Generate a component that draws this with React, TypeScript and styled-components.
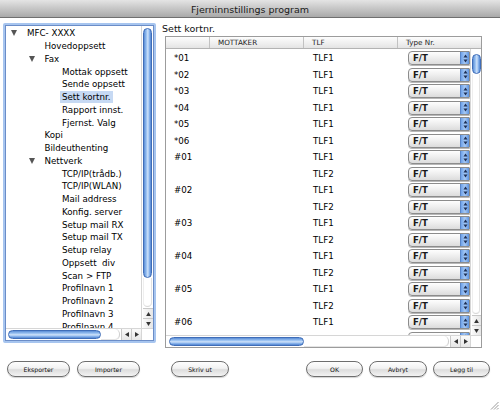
import React from "react";
import styled, { createGlobalStyle } from "styled-components";

const Global = createGlobalStyle`
  html, body { margin: 0; padding: 0; background: #fff; }
  body { font-family: "DejaVu Sans", "Lucida Grande", sans-serif; color: #000; }
  * { box-sizing: border-box; }
`;

const Window = styled.div`
  position: relative;
  width: 500px;
  height: 411px;
  background: #fff;
  display: flex;
  flex-direction: column;
  overflow: hidden;
`;

const TitleBar = styled.div`
  height: 18px;
  flex: none;
  background: linear-gradient(#e4e4e4, #c9c9c9 45%, #a9a9a9);
  border-bottom: 1px solid #6f6f6f;
  display: flex;
  align-items: center;
  justify-content: center;
  font-size: 9.5px;
  color: #1a1a1a;
  padding-top: 1px;
`;

const Main = styled.div`
  display: flex;
  align-items: flex-start;
  padding: 5px 0 0 3px;
  height: 330px;
  flex: none;
`;

/* ---------- tree ---------- */
const TreePanel = styled.div`
  width: 153px;
  height: 320px;
  border: 2px solid #a7c5ef;
  border-radius: 2px;
  flex: none;
`;

const TreeInner = styled.div`
  width: 100%;
  height: 100%;
  border: 1px solid #6b8dc7;
  display: grid;
  grid-template-columns: 1fr 12px;
  grid-template-rows: 1fr 12px;
  background: #fff;
`;

const TreeList = styled.div`
  overflow: hidden;
  padding-top: 1px;
`;

const TreeRow = styled.div<{ $level: number }>`
  height: 12.75px;
  display: flex;
  align-items: center;
  padding-left: ${(p) => 5 + p.$level * 17.5}px;
  font-size: 8.7px;
  white-space: pre;
`;

const Toggle = styled.span`
  width: 16px;
  flex: none;
  display: flex;
  align-items: center;
`;

const Triangle = styled.span`
  width: 0;
  height: 0;
  border-left: 3.5px solid transparent;
  border-right: 3.5px solid transparent;
  border-top: 6px solid #555;
`;

const TreeLabel = styled.span<{ $sel?: boolean }>`
  margin-left: -2px;
  padding: 1px 2px;
  background: ${(p) => (p.$sel ? "#c6d9f3" : "transparent")};
`;

/* ---------- scrollbars ---------- */
const VScroll = styled.div`
  display: flex;
  flex-direction: column;
  background: #fff;
  border-left: 1px solid #d6d6d6;
  padding-left: 1px;
  overflow: hidden;
`;

const VThumb = styled.div<{ $h: number; $top: number }>`
  height: ${(p) => p.$h}px;
  margin-top: ${(p) => p.$top}px;
  width: 9px;
  flex: none;
  border: 1px solid #3f6db8;
  border-radius: 5px;
  background: linear-gradient(to right, #5a8dd6, #9cc3f2 35%, #cfe2f9 55%, #8db7ee 75%, #5184d0);
`;

const VTrack = styled.div`
  flex: 1;
  border-bottom: 1px solid #d8d8d8;
  border-radius: 0 0 5px 5px;
  margin: 0 1px 1px 0;
  box-shadow: inset 1px 0 0 #eee, inset -1px 0 0 #e2e2e2;
`;

const HScroll = styled.div`
  display: flex;
  align-items: center;
  background: #fff;
  border-top: 1px solid #d6d6d6;
  overflow: hidden;
`;

const HThumb = styled.div<{ $w: number; $left: number }>`
  width: ${(p) => p.$w}px;
  margin-left: ${(p) => p.$left}px;
  height: 9px;
  flex: none;
  border: 1px solid #3f6db8;
  border-radius: 5px;
  background: linear-gradient(#5a8dd6, #9cc3f2 35%, #cfe2f9 55%, #8db7ee 75%, #5184d0);
`;

const HTrack = styled.div`
  flex: 1;
  height: 100%;
  border-right: 1px solid #d0d0d0;
  border-radius: 0 5px 5px 0;
  margin-right: 1px;
  box-shadow: inset 0 -1px 0 #e4e4e4;
`;

const ArrowBtn = styled.div<{ $h?: boolean }>`
  flex: none;
  width: ${(p) => (p.$h ? "10px" : "100%")};
  height: ${(p) => (p.$h ? "100%" : "10px")};
  display: flex;
  align-items: center;
  justify-content: center;
  background: linear-gradient(${(p) => (p.$h ? "#fafafa, #e6e6e6" : "to right, #fafafa, #e6e6e6")});
  border-${(p) => (p.$h ? "left" : "top")}: 1px solid #c8c8c8;
`;

const Corner = styled.div`
  background: #fff;
  border-top: 1px solid #d6d6d6;
  border-left: 1px solid #d6d6d6;
`;

const Arrow = ({ dir }: { dir: "up" | "down" | "left" | "right" }) => {
  const pts =
    dir === "up"
      ? "3,0 6,5 0,5"
      : dir === "down"
      ? "0,0 6,0 3,5"
      : dir === "left"
      ? "5,0 5,6 0,3"
      : "0,0 5,3 0,6";
  const w = dir === "up" || dir === "down" ? 6 : 5;
  const h = dir === "up" || dir === "down" ? 5 : 6;
  return (
    <svg width={w - 1} height={h - 1} viewBox={`0 0 ${w} ${h}`}>
      <polygon points={pts} fill="#333" />
    </svg>
  );
};

/* ---------- right side ---------- */
const RightCol = styled.div`
  margin-left: 6px;
  display: flex;
  flex-direction: column;
`;

const SectionLabel = styled.div`
  height: 13px;
  font-size: 9.5px;
  line-height: 12px;
  color: #111;
`;

const Table = styled.div`
  margin-left: 3px;
  width: 317px;
  height: 312px;
  border: 1px solid #9c9c9c;
  display: flex;
  flex-direction: column;
`;

const HeaderRow = styled.div`
  height: 12px;
  flex: none;
  display: grid;
  grid-template-columns: 44px 94px 94px 1fr;
  background: linear-gradient(#fdfdfd, #f1f1f1 50%, #e4e4e4);
  border-bottom: 1px solid #b3b3b3;
`;

const HeaderCell = styled.div`
  font-size: 7.2px;
  line-height: 11px;
  padding-left: 8px;
  color: #222;
  border-right: 1px solid #c2c2c2;
  &:last-child { border-right: none; }
`;

const TableBody = styled.div`
  flex: 1;
  display: grid;
  grid-template-columns: 1fr 11px;
  grid-template-rows: 1fr 12px;
  min-height: 0;
`;

const Rows = styled.div`
  overflow: hidden;
  padding-top: 1px;
`;

const Row = styled.div`
  height: 16.5px;
  display: grid;
  grid-template-columns: 44px 94px 94px 1fr;
  align-items: center;
  font-size: 8.7px;
`;

const Cell = styled.div<{ $pad: number }>`
  padding-left: ${(p) => p.$pad}px;
  white-space: nowrap;
`;

const Select = styled.div`
  margin-left: 10px;
  height: 14px;
  display: flex;
  border: 1px solid #8c8c8c;
  border-radius: 4px 1px 1px 4px;
  background: linear-gradient(#fefefe, #eeeeee 50%, #dcdcdc);
  box-shadow: 0 1px 0 #b8b8b8;
  overflow: hidden;
`;

const SelectText = styled.span`
  flex: 1;
  padding-left: 4px;
  font-size: 8.6px;
  font-weight: bold;
  line-height: 12px;
  color: #1a1a1a;
`;

const Stepper = styled.span`
  width: 9px;
  flex: none;
  background: linear-gradient(to right, #6ea2ea, #a7c9f4 50%, #5b93e2);
  border-left: 1px solid #5a86c8;
  display: flex;
  align-items: center;
  justify-content: center;
`;

/* ---------- footer ---------- */
const Footer = styled.div`
  margin-top: 13px;
  display: flex;
  align-items: center;
  padding: 0 10px 0 7px;
`;

const Group = styled.div<{ $ml?: number }>`
  display: flex;
  gap: ${(p) => (p.$ml !== undefined ? 6 : 7)}px;
  margin-left: ${(p) => p.$ml ?? 0}px;
`;

const Spacer = styled.div`
  flex: 1;
`;

const Button = styled.button<{ $w: number }>`
  width: ${(p) => p.$w}px;
  height: 16px;
  padding: 0;
  border: 1px solid #6e6e6e;
  border-radius: 8px;
  background: linear-gradient(#fefefe, #f2f2f2 45%, #dddddd 55%, #f3f3f3);
  box-shadow: 0 1px 1px rgba(0, 0, 0, 0.18);
  font-family: "DejaVu Sans", sans-serif;
  font-size: 6.2px;
  color: #111;
  display: flex;
  align-items: center;
  justify-content: center;
`;

const Grip = styled.svg`
  position: absolute;
  right: 1px;
  bottom: 1px;
`;

type TreeItem = { l: number; t: string; open?: boolean; sel?: boolean };

const tree: TreeItem[] = [
  { l: 0, t: "MFC- XXXX", open: true },
  { l: 1, t: "Hovedoppsett" },
  { l: 1, t: "Fax", open: true },
  { l: 2, t: "Mottak oppsett" },
  { l: 2, t: "Sende oppsett" },
  { l: 2, t: "Sett kortnr.", sel: true },
  { l: 2, t: "Rapport innst." },
  { l: 2, t: "Fjernst. Valg" },
  { l: 1, t: "Kopi" },
  { l: 1, t: "Bildeuthenting" },
  { l: 1, t: "Nettverk", open: true },
  { l: 2, t: "TCP/IP(trådb.)" },
  { l: 2, t: "TCP/IP(WLAN)" },
  { l: 2, t: "Mail address" },
  { l: 2, t: "Konfig. server" },
  { l: 2, t: "Setup mail RX" },
  { l: 2, t: "Setup mail TX" },
  { l: 2, t: "Setup relay" },
  { l: 2, t: "Oppsett  div" },
  { l: 2, t: "Scan > FTP" },
  { l: 2, t: "Profilnavn 1" },
  { l: 2, t: "Profilnavn 2" },
  { l: 2, t: "Profilnavn 3" },
  { l: 2, t: "Profilnavn 4" },
];

const rows: { n: string; tlf: string }[] = [];
["*01", "*02", "*03", "*04", "*05", "*06"].forEach((n) => rows.push({ n, tlf: "TLF1" }));
["#01", "#02", "#03", "#04", "#05", "#06"].forEach((n) => {
  rows.push({ n, tlf: "TLF1" });
  rows.push({ n: "", tlf: "TLF2" });
});

const StepperIcon = () => (
  <svg width="5" height="9" viewBox="0 0 5 9">
    <polygon points="2.5,0.5 4.5,3.5 0.5,3.5" fill="#1d2f55" />
    <polygon points="0.5,5.5 4.5,5.5 2.5,8.5" fill="#1d2f55" />
  </svg>
);

export default function App() {
  return (
    <Window>
      <Global />
      <TitleBar>Fjerninnstillings program</TitleBar>
      <Main>
        <TreePanel>
          <TreeInner>
            <TreeList>
              {tree.map((it, i) => (
                <TreeRow key={i} $level={it.l}>
                  <Toggle>{it.open && <Triangle />}</Toggle>
                  <TreeLabel $sel={it.sel}>{it.t}</TreeLabel>
                </TreeRow>
              ))}
            </TreeList>
            <VScroll>
              <VThumb $h={250} $top={2} />
              <VTrack />
              <ArrowBtn>
                <Arrow dir="up" />
              </ArrowBtn>
              <ArrowBtn>
                <Arrow dir="down" />
              </ArrowBtn>
            </VScroll>
            <HScroll>
              <HThumb $w={93} $left={2} />
              <HTrack />
              <ArrowBtn $h>
                <Arrow dir="left" />
              </ArrowBtn>
              <ArrowBtn $h>
                <Arrow dir="right" />
              </ArrowBtn>
            </HScroll>
            <Corner />
          </TreeInner>
        </TreePanel>
        <RightCol>
          <SectionLabel>Sett kortnr.</SectionLabel>
          <Table>
            <HeaderRow>
              <HeaderCell />
              <HeaderCell>MOTTAKER</HeaderCell>
              <HeaderCell>TLF</HeaderCell>
              <HeaderCell>Type Nr.</HeaderCell>
            </HeaderRow>
            <TableBody>
              <Rows>
                {rows.map((r, i) => (
                  <Row key={i}>
                    <Cell $pad={8}>{r.n}</Cell>
                    <Cell $pad={9} />
                    <Cell $pad={9}>{r.tlf}</Cell>
                    <Select>
                      <SelectText>F/T</SelectText>
                      <Stepper>
                        <StepperIcon />
                      </Stepper>
                    </Select>
                  </Row>
                ))}
              </Rows>
              <VScroll>
                <VThumb $h={20} $top={5} />
                <VTrack />
                <ArrowBtn>
                  <Arrow dir="up" />
                </ArrowBtn>
                <ArrowBtn>
                  <Arrow dir="down" />
                </ArrowBtn>
              </VScroll>
              <HScroll>
                <HThumb $w={135} $left={3} />
                <HTrack />
                <ArrowBtn $h>
                  <Arrow dir="left" />
                </ArrowBtn>
                <ArrowBtn $h>
                  <Arrow dir="right" />
                </ArrowBtn>
              </HScroll>
              <Corner />
            </TableBody>
          </Table>
        </RightCol>
      </Main>
      <Footer>
        <Group>
          <Button $w={63}>Eksporter</Button>
          <Button $w={63}>Importer</Button>
        </Group>
        <Group $ml={31}>
          <Button $w={58}>Skriv ut</Button>
        </Group>
        <Spacer />
        <Group $ml={0}>
          <Button $w={57}>OK</Button>
          <Button $w={58}>Avbryt</Button>
          <Button $w={57}>Legg til</Button>
        </Group>
      </Footer>
      <Grip width="9" height="9" viewBox="0 0 9 9">
        <line x1="8.5" y1="1" x2="1" y2="8.5" stroke="#9a9a9a" />
        <line x1="8.5" y1="4" x2="4" y2="8.5" stroke="#9a9a9a" />
        <line x1="8.5" y1="7" x2="7" y2="8.5" stroke="#9a9a9a" />
      </Grip>
    </Window>
  );
}
